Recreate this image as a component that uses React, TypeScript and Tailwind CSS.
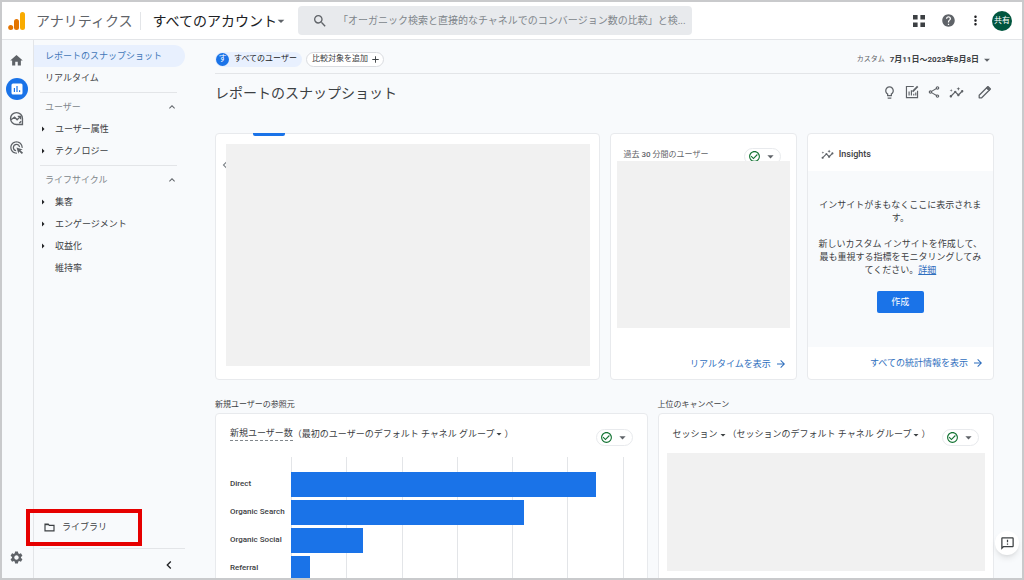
import React from "react";
import {
  MdHome,
  MdSearch,
  MdHelp,
  MdMoreVert,
  MdArrowDropDown,
  MdArrowRight,
  MdLightbulbOutline,
  MdOutlineShare,
  MdInsights,
  MdSettings,
  MdArrowForward,
  MdCheckCircleOutline,
  MdAdd,
  MdKeyboardArrowUp,
  MdChevronLeft,
  MdAdsClick,
  MdOutlineFeedback,
} from "react-icons/md";

function Logo() {
  return (
    <svg viewBox="0 0 18 20" className="h-[20px] w-[18px]" aria-hidden="true">
      <rect x="12" y="1" width="5" height="18" rx="2.5" fill="#f9ab00" />
      <rect x="6" y="8" width="5" height="11" rx="2.5" fill="#e37400" />
      <circle cx="2.7" cy="16.5" r="2.5" fill="#e37400" />
    </svg>
  );
}

function AppsIcon() {
  return (
    <svg viewBox="0 0 12 12" className="size-[12px]" fill="#3c4043" aria-hidden="true">
      <path d="M0 0h4.600v4.600H0zM7.400 0H12v4.600H7.400zM0 7.400h4.600V12H0zM7.400 7.400H12V12H7.400z" />
    </svg>
  );
}

function ReportsIcon() {
  return (
    <svg viewBox="0 0 12 12" className="size-[12px]" aria-hidden="true">
      <rect x="0.5" y="0.5" width="11" height="11" rx="1.5" fill="#fff" />
      <path d="M3.4 9V5M6 9V3M8.6 9V7.2" stroke="#1a73e8" strokeWidth="1.2" />
    </svg>
  );
}

function ExploreIcon() {
  return (
    <svg viewBox="0 0 24 24" className="size-[15px]" fill="none" stroke="#5f6368" strokeWidth="2.2" aria-hidden="true">
      <path d="M12 2.500a9.500 9.500 0 1 0 0 19h9.500V12A9.500 9.500 0 0 0 12 2.500z" />
      <path d="M3 14l6-4 4 4 5-5" />
      <path d="M14 8.500h4.500V13" />
      <path d="M16.500 19.500l3-3" />
    </svg>
  );
}

function EditChartIcon() {
  return (
    <svg viewBox="0 0 24 24" className="size-[14px]" fill="none" stroke="#5f6368" strokeWidth="2" aria-hidden="true">
      <path d="M15 2.500H2.500v19h19V10" />
      <path d="M7 18v-7M11 18V9M15 18v-3M18.500 18v-5" />
      <path d="M13 11.500 21.800 2.200" strokeWidth="3" />
    </svg>
  );
}

function PencilIcon() {
  return (
    <svg viewBox="0 0 24 24" className="size-[15px]" fill="none" stroke="#5f6368" strokeWidth="2" strokeLinejoin="round" aria-hidden="true">
      <path d="M3.500 20.500v-4L15.500 4.500l4 4-12 12z" />
      <path d="M15.500 4.500l2-2 4 4-2 2z" fill="#5f6368" />
    </svg>
  );
}

function FolderIcon() {
  return (
    <svg viewBox="0 0 12 10" className="h-[9px] w-[11px]" fill="none" stroke="#3c4043" strokeWidth="1.3" aria-hidden="true">
      <path d="M1 1.200h3.600l1.200 1.400H11v6.200H1z" />
      <path d="M1 1.800h4.200" />
    </svg>
  );
}

type NavEntry = { label: string; expandable: boolean };

function NavSection({ title, items }: { title: string; items: NavEntry[] }) {
  return (
    <section>
      <button className="flex h-[22px] w-full items-center justify-between pr-[7px] pl-[11px] text-[#80868b]">
        {title}
        <MdKeyboardArrowUp className="size-[12px] text-[#5f6368]" />
      </button>
      <ul>
        {items.map((item) => (
          <li key={item.label}>
            <a href="#" className="flex h-[22px] items-center pl-[3px]">
              <span className="flex w-[18px] items-center">
                {item.expandable && <MdArrowRight className="size-[12px] text-[#202124]" />}
              </span>
              {item.label}
            </a>
          </li>
        ))}
      </ul>
    </section>
  );
}

function Divider() {
  return <hr className="my-[3px] mr-2 ml-[6px] border-t border-[#e3e5e8]" />;
}

function StatusChip() {
  return (
    <button
      aria-label="データ品質"
      className="flex h-[17px] w-[37px] shrink-0 items-center justify-between rounded-full border border-[#e8eaed] bg-white pr-[2px] pl-[3px]"
    >
      <MdCheckCircleOutline className="size-[13px] text-[#137333]" />
      <MdArrowDropDown className="size-[15px] text-[#5f6368]" />
    </button>
  );
}

function Card({ className, children }: { className: string; children: React.ReactNode }) {
  return <article className={`rounded-[4px] border border-[#e8eaed] bg-white ${className}`}>{children}</article>;
}

function MoreLink({ children }: { children: React.ReactNode }) {
  return (
    <a href="#" className="flex items-center justify-end gap-1 text-[#2f6fbe]">
      {children}
      <MdArrowForward className="size-[12px]" />
    </a>
  );
}

const channels = [
  { name: "Direct", share: 91.6 },
  { name: "Organic Search", share: 70 },
  { name: "Organic Social", share: 21.6 },
  { name: "Referral", share: 5.8 },
];

function ChannelChart() {
  return (
    <div className="mt-[11px] mr-[23px] ml-[14px] grid grid-cols-[61px_1fr] text-[8px] font-medium text-[#3c4043]">
      <ul className="pt-[13px]">
        {channels.map((c) => (
          <li key={c.name} className="flex h-[28px] items-center whitespace-nowrap">
            {c.name}
          </li>
        ))}
      </ul>
      <div className="grid">
        <div className="col-start-1 row-start-1 grid grid-cols-6 border-l border-[#e3e5e8]">
          {[1, 2, 3, 4, 5, 6].map((n) => (
            <span key={n} className="border-r border-[#e3e5e8]" />
          ))}
        </div>
        <div className="relative col-start-1 row-start-1 pt-[13px]">
          {channels.map((c) => (
            <div key={c.name} className="flex h-[28px] items-center">
              <div className="h-[25px] bg-[#1a73e8]" style={{ width: `${c.share}%` }} />
            </div>
          ))}
        </div>
      </div>
    </div>
  );
}

export default function App() {
  return (
    <div className="flex h-screen flex-col overflow-hidden border-2 border-[#c9cacc] bg-[#f8fafc] font-['Roboto','Noto_Sans_CJK_JP',sans-serif] text-[9px] leading-none text-[#3c4043]">
      <header className="flex h-[38px] shrink-0 items-center border-b border-[#e3e5e8] bg-white pr-[10px] pl-[6px]">
        <Logo />
        <span className="ml-[10px] shrink-0 text-[14px] text-[#5f6368]">アナリティクス</span>
        <span className="ml-[8px] h-[18px] w-px shrink-0 bg-[#e3e5e8]" />
        <button className="ml-[11px] flex shrink-0 items-center text-[14px] text-[#202124]">
          すべてのアカウント
          <MdArrowDropDown className="-ml-1 size-[16px] text-[#5f6368]" />
        </button>
        <label className="ml-[9px] flex h-[29px] max-w-[394px] flex-1 items-center gap-[10px] rounded-[4px] bg-[#e8eaed] pl-[14px]">
          <MdSearch className="size-[16px] shrink-0 text-[#5f6368]" />
          <input
            type="text"
            aria-label="検索"
            placeholder="「オーガニック検索と直接的なチャネルでのコンバージョン数の比較」と検..."
            className="min-w-0 flex-1 bg-transparent text-[10px] outline-none placeholder:text-[#80868b]"
          />
        </label>
        <div className="ml-auto flex items-center">
          <button aria-label="アプリ">
            <AppsIcon />
          </button>
          <button aria-label="ヘルプ" className="ml-[16px]">
            <MdHelp className="size-[15px] text-[#5f6368]" />
          </button>
          <button aria-label="その他" className="ml-[12px]">
            <MdMoreVert className="size-[15px] text-[#202124]" />
          </button>
          <button className="ml-[9px] flex size-[20px] items-center justify-center rounded-full bg-[#00563f] text-[8px] text-white">
            共有
          </button>
        </div>
      </header>

      <div className="flex min-h-0 flex-1">
        <nav aria-label="メイン" className="flex w-[32px] shrink-0 flex-col items-center border-r border-[#e3e5e8] pt-[9px] pr-[2px] pb-[13px]">
          <a href="#" aria-label="ホーム" className="flex h-[22px] items-center">
            <MdHome className="size-[15px] text-[#5f6368]" />
          </a>
          <a href="#" aria-label="レポート" className="mt-[7px] flex size-[22px] items-center justify-center rounded-full bg-[#1a73e8]">
            <ReportsIcon />
          </a>
          <a href="#" aria-label="探索" className="mt-[7px] flex h-[22px] items-center">
            <ExploreIcon />
          </a>
          <a href="#" aria-label="広告" className="mt-[7px] flex h-[22px] items-center">
            <MdAdsClick className="size-[15px] text-[#5f6368]" />
          </a>
          <a href="#" aria-label="管理" className="mt-auto">
            <MdSettings className="size-[15px] text-[#5f6368]" />
          </a>
        </nav>

        <aside className="flex w-[151px] shrink-0 flex-col pt-[5px]">
          <a href="#" className="flex h-[22px] items-center rounded-r-full bg-[#e8f0fe] pl-[11px] text-[#4277b8]">
            レポートのスナップショット
          </a>
          <a href="#" className="flex h-[22px] items-center pl-[11px]">
            リアルタイム
          </a>
          <Divider />
          <NavSection
            title="ユーザー"
            items={[
              { label: "ユーザー属性", expandable: true },
              { label: "テクノロジー", expandable: true },
            ]}
          />
          <Divider />
          <NavSection
            title="ライフサイクル"
            items={[
              { label: "集客", expandable: true },
              { label: "エンゲージメント", expandable: true },
              { label: "収益化", expandable: true },
              { label: "維持率", expandable: false },
            ]}
          />
          <div className="relative mt-auto">
            <a href="#" className="flex h-[42px] items-center gap-[7px] pt-px pl-[10px]">
              <FolderIcon />
              ライブラリ
            </a>
            <span className="pointer-events-none absolute top-[3px] -left-[8px] h-[37px] w-[116px] border-4 border-[#e60000]" />
          </div>
          <div className="ml-[6px] flex h-[30px] items-center justify-end border-t border-[#e3e5e8] pt-[3px] pr-[8px]">
            <button aria-label="メニューを閉じる">
              <MdChevronLeft className="size-[16px] text-[#202124]" />
            </button>
          </div>
        </aside>

        <main className="min-w-0 flex-1 overflow-hidden pr-[28px] pl-[30px]">
          <div className="-mr-[6px] flex h-[34px] items-center border-b border-[#e3e5e8] pt-[5px] pr-[6px]">
            <button className="flex h-[15px] items-center gap-[5px] rounded-full bg-[#e8f0fe] pr-[5px] pl-px text-[8px] text-[#202124]">
              <span className="flex size-[13px] items-center justify-center rounded-full bg-[#1a73e8] text-[8px] text-white">す</span>
              すべてのユーザー
            </button>
            <button className="ml-[4px] flex h-[15px] items-center gap-[2px] rounded-full border border-[#dadce0] bg-white pr-[2px] pl-[5px] text-[8px] text-[#3c4043]">
              比較対象を追加
              <MdAdd className="size-[11px] text-[#3c4043]" />
            </button>
            <button className="ml-auto flex items-center gap-[5px] pt-px">
              <span className="text-[7px] text-[#5f6368]">カスタム</span>
              <span className="flex items-center text-[8px] font-bold">
                7月11日〜2023年8月8日
                <MdArrowDropDown className="ml-px size-[14px] text-[#5f6368]" />
              </span>
            </button>
          </div>

          <div className="flex h-[36px] items-center justify-between pr-[2px] text-[#5f6368]">
            <h1 className="pt-[2px] text-[14px] text-[#3c4043]">レポートのスナップショット</h1>
            <div className="flex items-center gap-[8px]">
              <button aria-label="ヒント">
                <MdLightbulbOutline className="size-[15px]" />
              </button>
              <button aria-label="比較を編集">
                <EditChartIcon />
              </button>
              <button aria-label="共有">
                <MdOutlineShare className="size-[14px]" />
              </button>
              <button aria-label="インサイト">
                <MdInsights className="size-[15px]" />
              </button>
              <button aria-label="レポートをカスタマイズ" className="ml-[5px]">
                <PencilIcon />
              </button>
            </div>
          </div>

          <div className="mt-[23px] grid grid-cols-4 gap-[10px]">
            <Card className="relative col-span-2 flex h-[247px] py-[10px] pr-[9px]">
              <span className="absolute -top-px left-[37px] h-[3px] w-[32px] rounded-b-[2px] bg-[#1a73e8]" />
              <button aria-label="前へ" className="mt-[15px] flex h-[11px] w-[10px] items-center">
                <MdChevronLeft className="ml-[2px] size-[14px] shrink-0 text-[#80868b]" />
              </button>
              <div className="h-[222px] flex-1 bg-[#f1f1f1]" />
            </Card>

            <Card className="flex h-[247px] flex-col px-[6px] pb-[9px]">
              <div className="flex h-[27px] items-end justify-between overflow-hidden pr-[9px] pl-[7px]">
                <h2 className="pb-[2px] text-[8px] text-[#5f6368]">
                  過去 <span className="font-medium">30</span> 分間のユーザー
                </h2>
                <div className="-mb-1">
                  <StatusChip />
                </div>
              </div>
              <div className="h-[167px] bg-[#f1f1f1]" />
              <div className="mt-auto pr-[3px]">
                <MoreLink>リアルタイムを表示</MoreLink>
              </div>
            </Card>

            <Card className="flex h-[247px] flex-col">
              <h2 className="flex h-[37px] items-center gap-[5px] pt-1 pl-[13px] text-[9px] font-medium">
                <MdInsights className="size-[13px] text-[#5f6368]" />
                Insights
              </h2>
              <div className="flex h-[176px] flex-col items-center bg-[#f8fafc] px-[8px] pt-[28px] text-center leading-[13px]">
                <p>
                  インサイトがまもなくここに表示されま
                  <br />
                  す。
                </p>
                <p className="mt-[13px]">
                  新しいカスタム インサイトを作成して、
                  <br />
                  最も重視する指標をモニタリングしてみ
                  <br />
                  てください。
                  <a href="#" className="text-[#2f6fbe] underline">
                    詳細
                  </a>
                </p>
                <button className="mt-[14px] h-[22px] w-[47px] rounded-[2px] bg-[#1a73e8] text-white">作成</button>
              </div>
              <div className="flex flex-1 items-center justify-end pr-[9px]">
                <MoreLink>すべての統計情報を表示</MoreLink>
              </div>
            </Card>
          </div>

          <div className="mt-[19px] grid grid-cols-[9fr_7fr] gap-[10px]">
            <section>
              <h2 className="text-[8px] leading-[12px]">新規ユーザーの参照元</h2>
              <Card className="mt-[2px] pb-10">
                <div className="flex h-[32px] items-end justify-between pr-[14px] pl-[14px]">
                  <h3 className="flex items-center pb-[5px] text-[9px] leading-[13px] whitespace-nowrap">
                    <span className="border-b border-dashed border-[#80868b]">新規ユーザー数</span>
                    （最初のユーザーのデフォルト チャネル グループ
                    <MdArrowDropDown className="-mx-px size-[12px]" />）
                  </h3>
                  <StatusChip />
                </div>
                <ChannelChart />
              </Card>
            </section>
            <section>
              <h2 className="text-[8px] leading-[12px]">上位のキャンペーン</h2>
              <Card className="mt-[2px] pb-10">
                <div className="flex h-[32px] items-end justify-between pr-[14px] pl-[14px]">
                  <h3 className="flex items-center pb-[5px] text-[9px] leading-[13px] whitespace-nowrap">
                    セッション
                    <MdArrowDropDown className="-mx-px size-[12px]" />
                    （セッションのデフォルト チャネル グループ
                    <MdArrowDropDown className="-mx-px size-[12px]" />）
                  </h3>
                  <StatusChip />
                </div>
                <div className="mx-[8px] mt-[7px] h-[118px] bg-[#f1f1f1]" />
              </Card>
            </section>
          </div>
        </main>
      </div>

      <button
        aria-label="フィードバック"
        className="fixed right-[5px] bottom-[25px] flex size-[24px] items-center justify-center rounded-full bg-white shadow-md"
      >
        <MdOutlineFeedback className="size-[15px] text-[#3c4043]" />
      </button>
    </div>
  );
}
